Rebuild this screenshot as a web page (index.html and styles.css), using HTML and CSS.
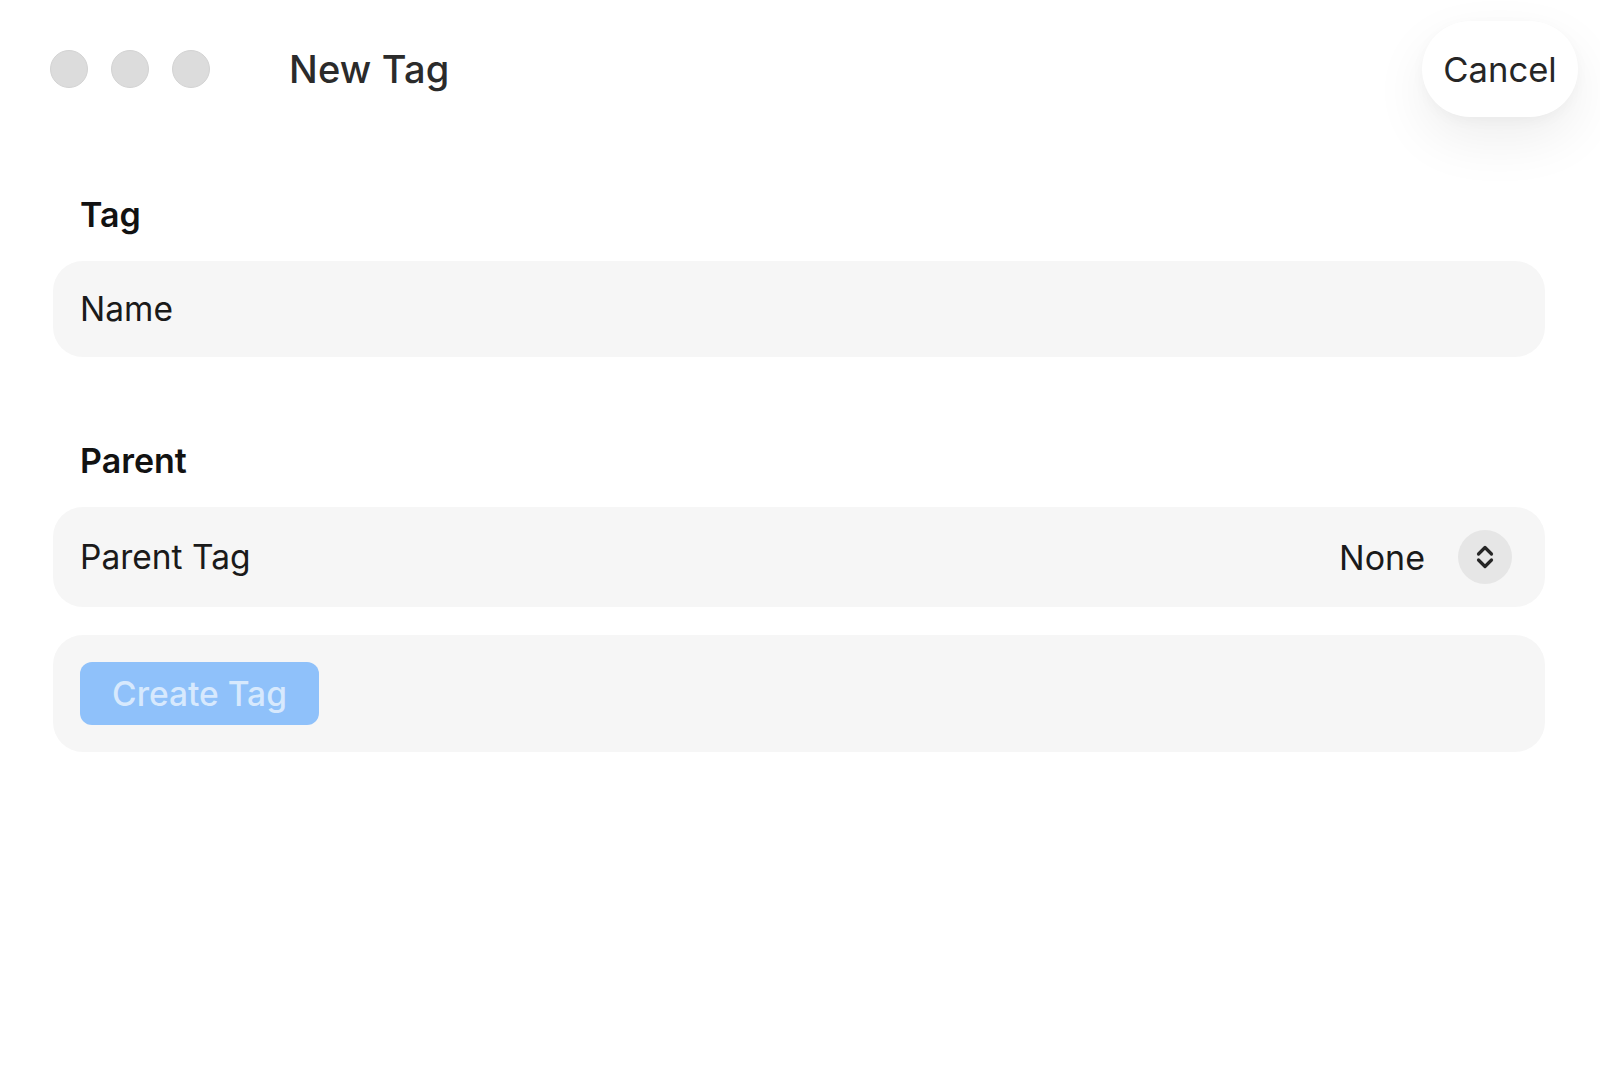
FILE: index.html
```html
<!DOCTYPE html>
<html lang="en">
<head>
<meta charset="utf-8">
<title>New Tag</title>
<link rel="stylesheet" href="styles.css">
</head>
<body>
<div class="window">
  <header class="titlebar">
    <div class="lights">
      <span class="light"></span>
      <span class="light"></span>
      <span class="light"></span>
    </div>
    <h1 class="title">New Tag</h1>
    <button class="cancel">Cancel</button>
  </header>
  <main class="form">
    <section class="section">
      <h2 class="section-label">Tag</h2>
      <div class="field field-name">
        <span class="placeholder">Name</span>
      </div>
    </section>
    <section class="section section-parent">
      <h2 class="section-label">Parent</h2>
      <div class="field field-parent">
        <span class="field-text">Parent Tag</span>
        <div class="picker">
          <span class="picker-value">None</span>
          <span class="stepper">
            <svg width="18" height="26" viewBox="0 0 18 26" fill="none" stroke="#262626" stroke-width="3.2" stroke-linecap="round" stroke-linejoin="round">
              <polyline points="2.5,10 9,3.5 15.5,10"/>
              <polyline points="2.5,16 9,22.5 15.5,16"/>
            </svg>
          </span>
        </div>
      </div>
      <div class="field field-actions">
        <button class="create" disabled>Create Tag</button>
      </div>
    </section>
  </main>
</div>
</body>
</html>
```
FILE: styles.css
```css
* { box-sizing: border-box; }
html, body {
  margin: 0;
  padding: 0;
  background: #ffffff;
}
body {
  width: 1600px;
  height: 1067px;
  overflow: hidden;
  font-family: "Inter", "Liberation Sans", sans-serif;
  color: #1a1a1a;
}
.window {
  display: flex;
  flex-direction: column;
}
.titlebar {
  height: 138px;
  display: flex;
  align-items: center;
  padding: 0 22px 0 50px;
}
.lights {
  display: flex;
  gap: 23px;
}
.light {
  width: 38px;
  height: 38px;
  border-radius: 50%;
  background: #dcdcdc;
  border: 1px solid #d3d3d3;
}
.title {
  margin: 0 0 0 79px;
  font-size: 38px;
  font-weight: 500;
  color: #2b2b2b;
  letter-spacing: 0.2px;
  flex: 1;
}
.cancel {
  width: 156px;
  height: 96px;
  border: none;
  border-radius: 48px;
  background: #ffffff;
  font-family: inherit;
  font-size: 34.6px;
  color: #262626;
  box-shadow: 0 22px 55px rgba(0, 0, 0, 0.07), 0 4px 14px rgba(0, 0, 0, 0.03);
  padding: 0;
}
.form {
  padding: 0 55px 0 53px;
  display: flex;
  flex-direction: column;
}
.section {
  display: flex;
  flex-direction: column;
}
.section-label {
  margin: 57px 0 26px 27px;
  font-size: 34px;
  line-height: 40px;
  font-weight: 600;
  color: #121212;
}
.section-parent .section-label {
  margin-top: 84px;
}
.field {
  background: #f6f6f6;
  border-radius: 30px;
  display: flex;
  align-items: center;
  padding: 0 33px 0 27px;
  font-size: 33.5px;
  color: #1a1a1a;
}
.field-name {
  height: 96px;
}
.field-parent {
  height: 100px;
  justify-content: space-between;
}
.picker {
  display: flex;
  align-items: center;
  gap: 33px;
}
.picker-value {
  font-size: 34px;
}
.stepper {
  width: 54px;
  height: 54px;
  border-radius: 50%;
  background: #e6e6e6;
  display: flex;
  align-items: center;
  justify-content: center;
}
.field-actions {
  margin-top: 28px;
  height: 117px;
  align-items: flex-start;
  padding-top: 27px;
}
.create {
  width: 239px;
  height: 63px;
  border: none;
  border-radius: 12px;
  background: #8fc1fa;
  color: #d7e9fd;
  font-family: inherit;
  font-size: 33.5px;
  font-weight: 500;
  padding: 0;
}
```
